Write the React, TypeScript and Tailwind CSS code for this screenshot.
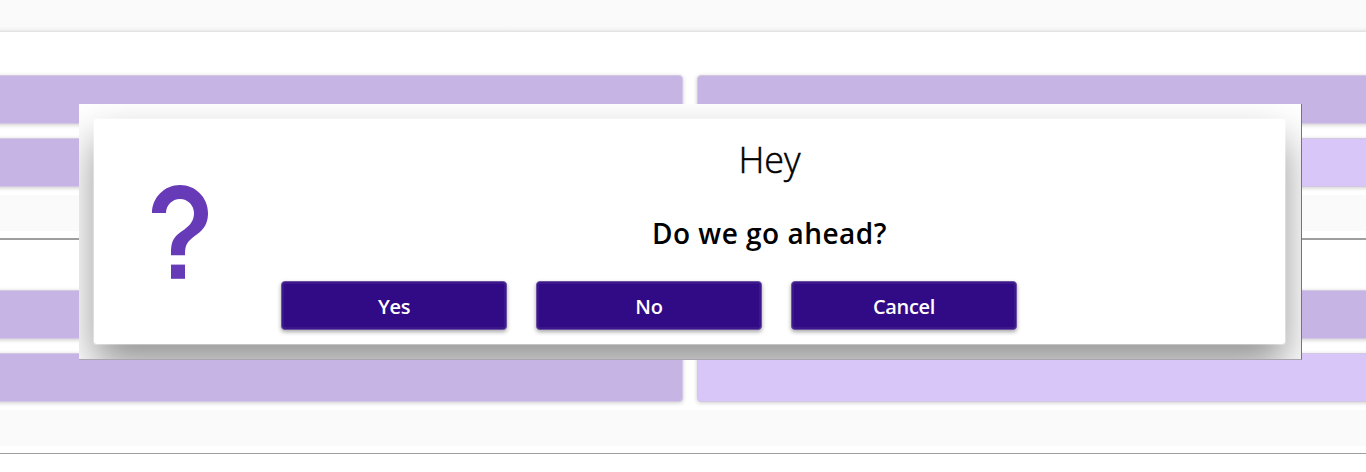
import React from "react";

const barBase =
  "h-[49px] rounded border border-[#d2c8e4] shadow-[0_1px_4px_rgba(0,0,0,0.2)]";

function Bars({ light }: { light?: boolean }) {
  return (
    <div className="grid shrink-0 grid-cols-[683px_669px] gap-x-[14px]">
      <div className={`${barBase} -ml-2 bg-[#c6b5e4]`} />
      <div className={`${barBase} -mr-2 ${light ? "bg-[#d9c6f9]" : "bg-[#c6b5e4]"}`} />
    </div>
  );
}

function DialogButton({ label }: { label: string }) {
  return (
    <button className="flex h-[49px] w-[226px] items-center justify-center rounded border border-[#6a4fa5] bg-[#310a85] pt-[2px] text-white shadow-[inset_0_0_0_2px_#3c178b,0_2px_4px_rgba(0,0,0,0.35)]">
      <span className="text-[20px] leading-6 font-semibold tracking-[-0.3px]">{label}</span>
    </button>
  );
}

function QuestionIcon() {
  return (
    <svg className="h-[94px] w-14" viewBox="0 0 56 94" fill="#673ab7">
      <path d="M0 28C0 12.5 12.5 0 28 0S56 12.5 56 28C56 36 53.500 42 48 47C44 50.500 40.500 52 37 56C33.500 60 33 64 33 70.300H19C19 62 19 56 25 50C30 45.500 35 43.500 39 38C41 35 42 32 42 28C42 20.300 35.700 14 28 14S14 20.300 14 28Z" />
      <path d="M19 79.600H33V93.800H19Z" />
    </svg>
  );
}

export default function App() {
  return (
    <div className="relative h-[472px] w-[1366px] overflow-hidden bg-white font-['Open_Sans','Noto_Sans',sans-serif] text-black">
      <div className="flex h-full flex-col">
        <div className="h-8 shrink-0 bg-[linear-gradient(to_bottom,#fafafa_26px,#f5f5f5_29px,#e9e9e9_31px,#dcdcdc_32px)]" />
        <div className="flex shrink-0 flex-col gap-[14px] pt-[43px]">
          <Bars />
          <Bars light />
        </div>
        <div className="mt-2 h-9 shrink-0 bg-[#fafafa]" />
        <div className="mt-[7px] h-[2px] shrink-0 bg-[#9e9e9e]" />
        <div className="flex shrink-0 flex-col gap-[14px] pt-[50px]">
          <Bars />
          <Bars light />
        </div>
        <div className="mt-2 h-9 shrink-0 bg-[#fafafa]" />
        <div className="mt-[7px] h-px shrink-0 bg-[#9e9e9e]" />
      </div>

      <div
        role="dialog"
        className="absolute top-[104px] left-[79px] h-[256px] w-[1223px] overflow-hidden border-r border-b border-r-[#757575] border-b-[#aaa5b0] bg-white pt-[15px] pl-[15px]"
      >
        <div className="flex h-[225px] w-[1191px] rounded-[3px] bg-white shadow-[0_0_1px_1px_rgba(255,255,255,0.4),0_21px_40px_rgba(0,0,0,0.43)]">
          <div className="w-[158px] shrink-0 pt-[66px] pl-[58px]">
            <QuestionIcon />
          </div>
          <div className="flex w-[1033px] flex-col pt-[17px]">
            <div className="flex h-12 items-center justify-center pl-[2px]">
              <h1 className="text-[36px] leading-[48px] font-light [-webkit-text-stroke:0.5px_black]">Hey</h1>
            </div>
            <div className="mt-[29px] flex h-10 items-center justify-center pl-[2px]">
              <p className="text-[28px] leading-10 font-semibold tracking-[0.5px]">Do we go ahead?</p>
            </div>
            <div className="mt-[28px] flex gap-[29px] pl-[29px]">
              <DialogButton label="Yes" />
              <DialogButton label="No" />
              <DialogButton label="Cancel" />
            </div>
          </div>
        </div>
      </div>
    </div>
  );
}
